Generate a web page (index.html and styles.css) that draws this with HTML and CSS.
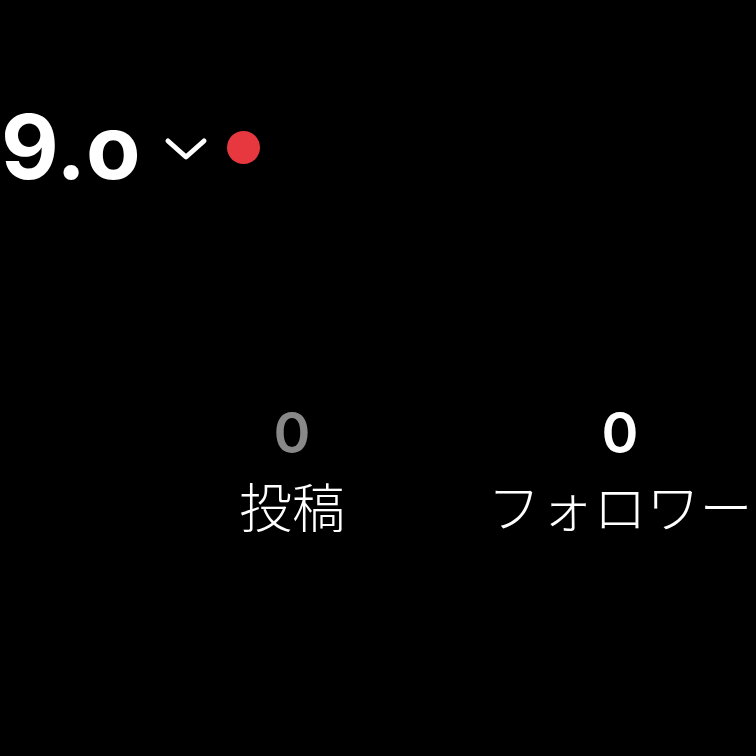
FILE: index.html
```html
<!DOCTYPE html>
<html lang="ja">
<head>
<meta charset="utf-8">
<link rel="stylesheet" href="styles.css">
</head>
<body>
<div class="page">
  <div class="header">
    <span class="username">9.o</span>
    <svg class="chevron" width="44" height="26" viewBox="0 0 44 26"><path d="M4 5 L22 21 L40 5" fill="none" stroke="#fff" stroke-width="5" stroke-linecap="round" stroke-linejoin="round"/></svg>
    <span class="dot"></span>
  </div>
  <div class="stats">
    <div class="stat">
      <span class="num muted">0</span>
      <span class="label">投稿</span>
    </div>
    <div class="stat">
      <span class="num">0</span>
      <span class="label">フォロワー</span>
    </div>
  </div>
</div>
</body>
</html>
```
FILE: styles.css
```css
html, body {
  margin: 0;
  padding: 0;
  background: #000;
  overflow: hidden;
}
.page {
  width: 756px;
  height: 756px;
  overflow: hidden;
  color: #fff;
  font-family: Inter, "Noto Sans CJK JP", sans-serif;
}
.header {
  display: flex;
  align-items: center;
  padding: 102px 0 0 1px;
  height: 89px;
}
.username {
  font-size: 89px;
  font-weight: 700;
  line-height: 1;
  letter-spacing: 0;
}
.chevron {
  margin-left: 23px;
  margin-top: 4px;
}
.dot {
  width: 33px;
  height: 33px;
  border-radius: 50%;
  background: #e8383f;
  margin-left: 19px;
  margin-top: 2px;
}
.stats {
  display: flex;
  padding-left: 128px;
  margin-top: 214px;
}
.stat {
  flex: 0 0 328px;
  display: flex;
  flex-direction: column;
  align-items: center;
}
.num {
  font-family: Inter, sans-serif;
  font-size: 56px;
  font-weight: 600;
  line-height: 1;
}
.num.muted {
  color: #888;
}
.label {
  font-family: "Noto Sans CJK JP", sans-serif;
  font-size: 53px;
  font-weight: 300;
  line-height: 1;
  margin-top: 18px;
}
```
